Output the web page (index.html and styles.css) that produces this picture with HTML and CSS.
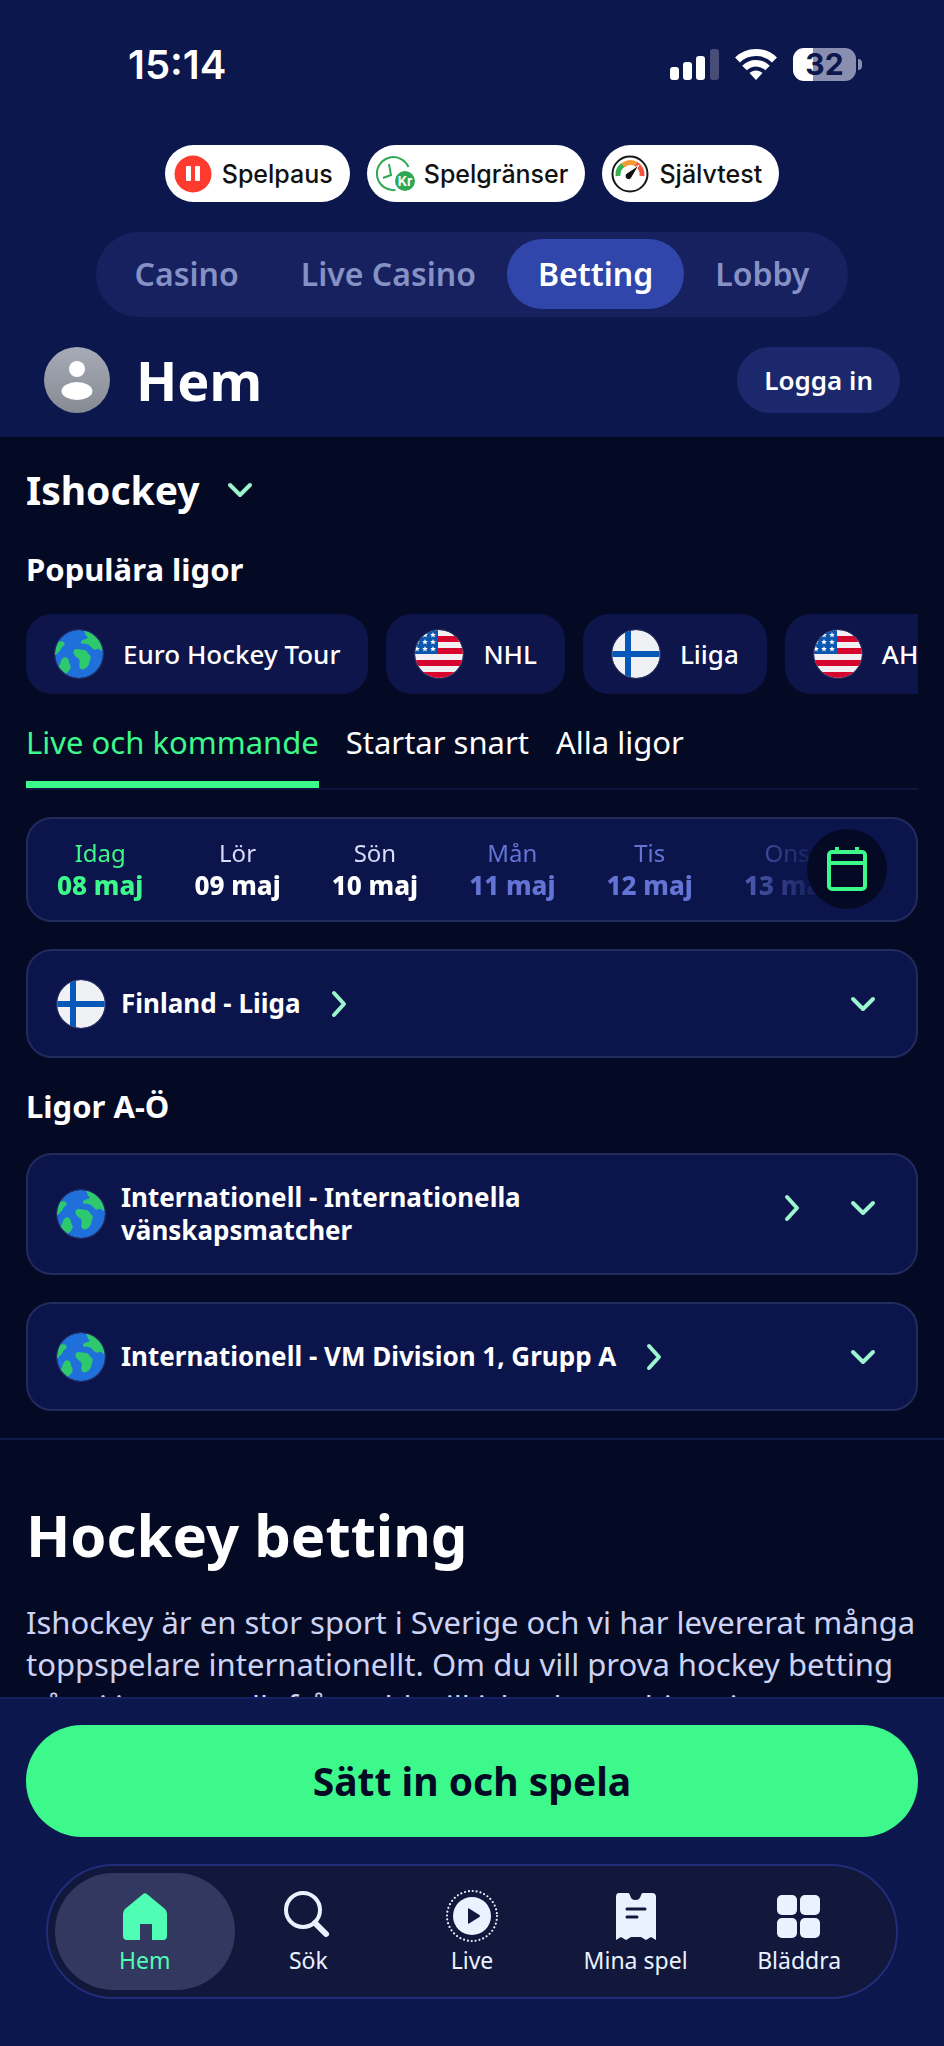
FILE: index.html
```html
<!DOCTYPE html>
<html lang="sv">
<head>
<meta charset="utf-8">
<meta name="viewport" content="width=device-width, initial-scale=1">
<title>Ishockey</title>
<link rel="stylesheet" href="styles.css">
</head>
<body>
<svg class="defs" aria-hidden="true">
  <defs>
    <clipPath id="disc"><circle cx="24" cy="24" r="24"/></clipPath>
    <symbol id="globe" viewBox="0 0 48 48">
      <g clip-path="url(#disc)">
        <rect width="48" height="48" fill="#2070dc"/>
        <g fill="#2fc96d">
          <path d="M29 1C31 4 30 6 33 7C32 10 26 9 26 12C26 15 31 13 34 15C37 17 38 21 42 19C45 18 46 22 49 22V0Z"/>
          <path d="M-1 11C3 11 6 11 9 12C11 15 8 16 6 18C6 21 4 21 3 23L-1 26Z"/>
          <path d="M19 20C22 18 25 20 29 20C32 20 32 23 35 25C37 28 34 31 34 34C32 39 27 41 25 38C23 35 26 32 24 29C21 27 17 24 19 20Z"/>
          <path d="M8 28C11 26 14 29 14 32C14 34 17 36 15 39C14 42 12 42 11 44L3 37C6 34 5 31 8 28Z"/>
        </g>
      </g>
    </symbol>
    <symbol id="usa" viewBox="0 0 48 48">
      <g clip-path="url(#disc)">
        <rect width="48" height="48" fill="#f2f0f2"/>
        <path d="M0 6h48v6H0zM0 18h48v6H0zM0 30h48v6H0zM0 42h48v6H0z" fill="#d6062f"/>
        <path d="M0 0h23v24H0z" fill="#0a55b0"/>
        <g fill="#fff">
          <path id="star" d="M18 2l.8 1.900 2 .2-1.500 1.300.5 2-1.800-1.100-1.800 1.100.5-2-1.500-1.300 2-.2z"/>
          <use href="#star" y="7"/><use href="#star" y="14"/>
          <use href="#star" x="-8"/><use href="#star" x="-8" y="7"/><use href="#star" x="-8" y="14"/>
          <use href="#star" x="-16" y="14"/><use href="#star" x="-16" y="7"/>
        </g>
      </g>
    </symbol>
    <symbol id="finland" viewBox="0 0 48 48">
      <g clip-path="url(#disc)">
        <rect width="48" height="48" fill="#f0f1f4"/>
        <path d="M13 0h6v48h-6zM0 21h48v6H0z" fill="#0758b8"/>
      </g>
    </symbol>
    <symbol id="down" viewBox="0 0 28 18">
      <path d="M4 4l10 10L24 4" fill="none" stroke="#9df5cf" stroke-width="4" stroke-linecap="round" stroke-linejoin="round"/>
    </symbol>
    <symbol id="right" viewBox="0 0 18 28">
      <path d="M4 3l10 11L4 25" fill="none" stroke="#9df5cf" stroke-width="4" stroke-linecap="round" stroke-linejoin="round"/>
    </symbol>
  </defs>
</svg>
<div class="app">
  <header class="header">
    <div class="status">
      <span class="clock">15:14</span>
      <div class="status-icons">
        <svg width="49" height="33" viewBox="0 0 49 33" fill="#fff" aria-hidden="true">
          <rect x="0" y="19" width="9" height="13" rx="3"/><rect x="13" y="14" width="9" height="18" rx="3"/><rect x="26" y="8" width="9" height="24" rx="3"/><rect x="40" y="1" width="9" height="31" rx="3" opacity=".24"/>
        </svg>
        <svg width="42" height="33" viewBox="0 0 42 33" fill="none" stroke="#fff" aria-hidden="true">
          <path d="M2.500 12C12.500 2 29.500 2 39.500 12" stroke-width="7"/>
          <path d="M9.500 20C16 13.500 26 13.500 32.500 20" stroke-width="6.500"/>
          <path d="M21 32l-6.500-7c3.500-3.500 9.500-3.500 13 0z" fill="#fff" stroke="none"/>
        </svg>
        <span class="battery"><span class="battery-body">32</span><span class="battery-tip"></span></span>
      </div>
    </div>
    <nav class="tools" aria-label="Spelansvar">
      <a class="tool" href="#">
        <svg width="38" height="38" viewBox="0 0 38 38" aria-hidden="true"><circle cx="19" cy="19" r="18.500" fill="#ff3b30"/><rect x="12" y="11" width="5" height="15" rx="1" fill="#fff"/><rect x="21" y="11" width="5" height="15" rx="1" fill="#fff"/></svg>
        Spelpaus
      </a>
      <a class="tool" href="#">
        <svg width="38" height="38" viewBox="0 0 38 38" overflow="visible" aria-hidden="true"><path d="M32.500 12A16.500 16.500 0 1 0 19.500 35" fill="none" stroke="#2fa854" stroke-width="2"/><path d="M13 9l2 11-8 3" fill="none" stroke="#2fa854" stroke-width="2"/><circle cx="29" cy="26" r="10" fill="#2fa854"/><text x="29" y="31" class="kr">Kr</text></svg>
        Spelgränser
      </a>
      <a class="tool" href="#">
        <svg width="38" height="38" viewBox="0 0 38 38" fill="none" aria-hidden="true"><circle cx="19" cy="19" r="17.500" stroke="#171717" stroke-width="2"/><path d="M7 21A12 12 0 0 1 12 10" stroke="#35b14e" stroke-width="5"/><path d="M12 10.500A12 12 0 0 1 25 9" stroke="#f39a35" stroke-width="5"/><path d="M25 9A12 12 0 0 1 31 21" stroke="#f4533d" stroke-width="5"/><path d="M28 10l-7 12a3.500 3.500 0 1 1-5-4z" fill="#111" stroke="#fff" stroke-width="1"/></svg>
        Självtest
      </a>
    </nav>
    <nav class="products" aria-label="Produkter">
      <a class="product" href="#">Casino</a>
      <a class="product" href="#">Live Casino</a>
      <a class="product product-active" href="#" aria-current="page">Betting</a>
      <a class="product" href="#">Lobby</a>
    </nav>
    <div class="title-row">
      <svg class="avatar" viewBox="0 0 66 66" aria-hidden="true">
        <defs><linearGradient id="grey" x1="0" y1="0" x2="0" y2="1"><stop offset="0" stop-color="#a7abb6"/><stop offset="1" stop-color="#868a93"/></linearGradient></defs>
        <circle cx="33" cy="33" r="33" fill="url(#grey)"/><circle cx="33" cy="22" r="8" fill="#fff"/><ellipse cx="33" cy="44" rx="15.500" ry="9" fill="#fff"/>
      </svg>
      <h1 class="title">Hem</h1>
      <button class="login" type="button">Logga in</button>
    </div>
  </header>

  <main class="main">
    <button class="sport" type="button">Ishockey <svg width="28" height="18" aria-hidden="true"><use href="#down"/></svg></button>
    <h2 class="heading heading-popular">Populära ligor</h2>
    <div class="chips">
      <a class="chip" href="#"><svg class="flag" aria-hidden="true"><use href="#globe"/></svg>Euro Hockey Tour</a>
      <a class="chip" href="#"><svg class="flag" aria-hidden="true"><use href="#usa"/></svg>NHL</a>
      <a class="chip" href="#"><svg class="flag" aria-hidden="true"><use href="#finland"/></svg>Liiga</a>
      <a class="chip" href="#"><svg class="flag" aria-hidden="true"><use href="#usa"/></svg>AHL</a>
    </div>
    <nav class="tabs" aria-label="Matcher">
      <a class="tab tab-active" href="#">Live och kommande</a>
      <a class="tab" href="#">Startar snart</a>
      <a class="tab" href="#">Alla ligor</a>
    </nav>
    <div class="card dates">
      <div class="days">
        <button class="day day-today" type="button"><span>Idag</span><b>08 maj</b></button>
        <button class="day" type="button"><span>Lör</span><b>09 maj</b></button>
        <button class="day" type="button"><span>Sön</span><b>10 maj</b></button>
        <button class="day day-muted" type="button"><span>Mån</span><b>11 maj</b></button>
        <button class="day day-muted" type="button"><span>Tis</span><b>12 maj</b></button>
        <button class="day day-muted" type="button"><span>Ons</span><b>13 maj</b></button>
      </div>
      <button class="calendar" type="button" aria-label="Välj datum">
        <svg width="40" height="46" viewBox="0 0 40 46" fill="none" stroke="#3df88a" stroke-width="4" aria-hidden="true"><rect x="2" y="6" width="36" height="37" rx="3"/><path d="M2 17h36M10 1v6M30 1v6"/></svg>
      </button>
    </div>
    <div class="card league">
      <a class="league-link" href="#"><svg class="flag" aria-hidden="true"><use href="#finland"/></svg><span class="league-name">Finland - Liiga</span><svg class="go" aria-hidden="true"><use href="#right"/></svg></a>
      <button class="toggle" type="button" aria-label="Visa matcher"><svg width="28" height="18" aria-hidden="true"><use href="#down"/></svg></button>
    </div>
    <h2 class="heading heading-all">Ligor A-Ö</h2>
    <div class="card league league-tall">
      <a class="league-link league-link-wide" href="#"><svg class="flag" aria-hidden="true"><use href="#globe"/></svg><span class="league-name">Internationell - Internationella<br>vänskapsmatcher</span><svg class="go" aria-hidden="true"><use href="#right"/></svg></a>
      <button class="toggle" type="button" aria-label="Visa matcher"><svg width="28" height="18" aria-hidden="true"><use href="#down"/></svg></button>
    </div>
    <div class="card league">
      <a class="league-link" href="#"><svg class="flag" aria-hidden="true"><use href="#globe"/></svg><span class="league-name">Internationell - VM Division 1, Grupp A</span><svg class="go" aria-hidden="true"><use href="#right"/></svg></a>
      <button class="toggle" type="button" aria-label="Visa matcher"><svg width="28" height="18" aria-hidden="true"><use href="#down"/></svg></button>
    </div>
    <article class="article">
      <h2 class="article-title">Hockey betting</h2>
      <p class="article-text">Ishockey är en stor sport i Sverige och vi har levererat många toppspelare internationellt. Om du vill prova hockey betting<br>går vi igenom allt från odds till ishockeyns historia</p>
    </article>
  </main>

  <footer class="footer">
    <button class="deposit" type="button">Sätt in och spela</button>
    <nav class="dock" aria-label="Meny">
      <a class="dock-item dock-active" href="#" aria-current="page">
        <svg class="dock-icon" viewBox="0 0 54 54" fill="#50fdb4" aria-hidden="true"><path d="M24.500 5.500q2.500-2.500 5 0L47 20q2 2 2 5v22q0 4-4 4H34V35H22v16H9q-4 0-4-4V25q0-3 2-5z"/></svg>
        <span>Hem</span>
      </a>
      <a class="dock-item" href="#">
        <svg class="dock-icon" viewBox="0 0 54 54" fill="none" stroke="#eaf2ff" aria-hidden="true"><circle cx="22" cy="21" r="17" stroke-width="4"/><path d="M34 34l11 11" stroke-width="6" stroke-linecap="round"/></svg>
        <span>Sök</span>
      </a>
      <a class="dock-item" href="#">
        <svg class="dock-icon" viewBox="0 0 54 54" aria-hidden="true"><circle cx="27" cy="27" r="25" fill="none" stroke="#eaf2ff" stroke-width="2.200" stroke-linecap="round" stroke-dasharray="0 3.927"/><circle cx="27" cy="27" r="19" fill="#eaf2ff"/><path d="M23 20v14q0 1 1 .5l10.500-6.500q1-1 0-2L24 19.500q-1-.5-1 .5z" fill="#12183c"/></svg>
        <span>Live</span>
      </a>
      <a class="dock-item" href="#">
        <svg class="dock-icon" viewBox="0 0 54 54" aria-hidden="true"><path d="M10 4h9c3 0 1 7 7.500 7S31 4 34 4h9q4 0 4 4v43l-5-3-5 3-5-3h-10l-5 3-5-3-5 3V8q0-4 3-4z" fill="#eaf2ff"/><path d="M18 20h18M18 28h10" stroke="#12183c" stroke-width="3" stroke-linecap="round"/></svg>
        <span>Mina spel</span>
      </a>
      <a class="dock-item" href="#">
        <svg class="dock-icon" viewBox="0 0 54 54" fill="#eaf2ff" aria-hidden="true"><rect x="5" y="6" width="20" height="20" rx="5"/><rect x="28" y="6" width="20" height="20" rx="5"/><rect x="5" y="29" width="20" height="20" rx="5"/><rect x="28" y="29" width="20" height="20" rx="5"/></svg>
        <span>Bläddra</span>
      </a>
    </nav>
  </footer>
</div>
</body>
</html>
```
FILE: styles.css
```css
* { box-sizing: border-box; }

body {
  margin: 0;
  background: #050a24;
  color: #fff;
  font-family: "Noto Sans", "Open Sans", sans-serif;
}

a { color: inherit; text-decoration: none; }

button {
  border: 0;
  padding: 0;
  background: none;
  color: inherit;
  font: inherit;
  cursor: pointer;
}

svg { display: block; flex: none; }
h1, h2, p { margin: 0; }

.defs { position: absolute; width: 0; height: 0; }

.app {
  display: flex;
  flex-direction: column;
  height: 100vh;
}

/* Header */
.header {
  flex: none;
  padding-bottom: 24px;
  background: #0c174d;
}

.status {
  display: flex;
  align-items: center;
  justify-content: space-between;
  padding: 40px 82px 56px 128px;
  font-family: Inter, sans-serif;
}

.clock { font-size: 40px; line-height: 49px; font-weight: 600; }
.status-icons { display: flex; align-items: center; gap: 16px; }
.battery { display: flex; align-items: center; gap: 2px; }

.battery-body {
  width: 63px;
  border-radius: 11px;
  background: linear-gradient(90deg, #fff 20px, #8a8fb1 20px);
  color: #0c174d;
  font-size: 30px;
  line-height: 33px;
  font-weight: 700;
  text-align: center;
}

.battery-tip {
  width: 4px;
  height: 11px;
  border-radius: 0 4px 4px 0;
  background: #8a8fb1;
}

.tools { display: flex; justify-content: center; gap: 17px; }

.tool {
  display: flex;
  align-items: center;
  gap: 10px;
  height: 57px;
  padding: 0 17px 0 9px;
  border-radius: 29px;
  background: #fff;
  color: #111;
  font-family: Inter, sans-serif;
  font-size: 25px;
  font-weight: 500;
}

.kr { fill: #fff; font-size: 13px; font-weight: 700; text-anchor: middle; }

.products {
  display: flex;
  width: fit-content;
  margin: 30px auto;
  padding: 7px 8px 8px;
  border-radius: 43px;
  background: #18215f;
  color: #8692c5;
  font-size: 32px;
  font-weight: 600;
}

.product { padding: 0 31px; border-radius: 35px; line-height: 70px; }
.product-active { background: #3046ab; color: #fff; }

.title-row {
  display: flex;
  align-items: center;
  padding: 0 44px;
}

.avatar { width: 66px; height: 66px; }
.title { flex: 1; margin-left: 26px; font-size: 54px; line-height: 66px; font-weight: 700; }

.login {
  padding: 0 27px;
  border-radius: 33px;
  background: #1b286b;
  font-size: 26px;
  line-height: 66px;
  font-weight: 600;
}

/* Content */
.main {
  flex: 1;
  min-height: 0;
  overflow: hidden;
  padding: 29px 26px 0;
}

.sport {
  display: flex;
  align-items: center;
  gap: 26px;
  font-size: 39px;
  line-height: 48px;
  font-weight: 700;
}

.heading { font-size: 31px; line-height: 40px; font-weight: 700; }
.heading-popular { margin: 35px 0 25px; }
.heading-all { margin: 28px 0 27px; }

.chips { display: flex; gap: 18px; overflow: hidden; }

.chip {
  display: flex;
  flex: none;
  align-items: center;
  gap: 20px;
  height: 80px;
  padding: 0 28px 0 29px;
  border-radius: 26px;
  background: #0d154b;
  font-size: 26px;
  font-weight: 500;
}

.flag {
  width: 48px;
  height: 48px;
  border-radius: 50%;
  box-shadow: 0 0 0 1px #2a3264;
}

.tabs {
  display: flex;
  gap: 27px;
  margin: 28px 0 27px;
  border-bottom: 2px solid #0f143e;
  font-size: 31px;
  line-height: 40px;
}

.tab { padding-bottom: 19px; border-bottom: 7px solid transparent; white-space: nowrap; }
.tab-active { border-color: #3df88a; color: #3df88a; }

.card {
  display: flex;
  align-items: center;
  border: 2px solid #232a5e;
  border-radius: 26px;
  background: #0c154b;
}

.dates { position: relative; height: 105px; padding: 0 29px 2px; }

.days {
  display: flex;
  flex: 1;
  gap: 51px;
  min-width: 0;
  padding: 4px 0;
  mask-image: linear-gradient(90deg, #000 660px, transparent 770px);
}

.day {
  flex: none;
  display: flex;
  flex-direction: column;
  align-items: center;
  font-size: 24px;
  line-height: 32px;
}

.day span { color: #d8dcf8; }
.day b { font-size: 26px; font-weight: 800; }
.day.day-today, .day-today span { color: #3df88a; }
.day.day-muted, .day-muted span { color: #6474d4; }

.calendar {
  position: absolute;
  right: 29px;
  display: grid;
  place-items: center;
  width: 80px;
  height: 80px;
  border-radius: 50%;
  background: #050a24;
}

.league { min-height: 109px; margin-top: 27px; padding: 16px 27px 16px 29px; }
.league-tall { min-height: 122px; }

.league-link {
  display: flex;
  align-items: center;
  gap: 16px;
  font-size: 26px;
  line-height: 33px;
  font-weight: 700;
}

.league-link-wide { flex: 1; }
.league-link-wide .league-name { flex: 1; }
.go { width: 18px; height: 28px; margin-left: 13px; }
.toggle { margin-left: auto; padding: 12px; }
.league-link-wide + .toggle { margin-left: 36px; }
.league-tall .go, .league-tall .toggle { margin-bottom: 12px; }

.article {
  margin: 27px -26px 0;
  padding: 59px 26px 0;
  border-top: 2px solid #10174a;
}

.article-title { margin-bottom: 30px; font-size: 58px; line-height: 72px; font-weight: 700; }
.article-text { color: #cdd3f5; font-size: 31px; line-height: 42px; }

/* Bottom bar */
.footer {
  flex: none;
  padding: 26px 26px 47px;
  border-top: 2px solid #14205f;
  background: #0c174d;
}

.deposit {
  display: block;
  width: 100%;
  margin-bottom: 27px;
  border-radius: 56px;
  background: #3df88a;
  color: #050a24;
  font-size: 39px;
  line-height: 112px;
  font-weight: 700;
}

.dock {
  display: grid;
  grid-template-columns: repeat(5, 1fr);
  margin: 0 20px;
  padding: 7px 15px;
  border: 2px solid #232c78;
  border-radius: 68px;
  background: #12183c;
  color: #eaf2ff;
  font-size: 23px;
  line-height: 34px;
}

.dock-item {
  display: flex;
  flex-direction: column;
  align-items: center;
  height: 117px;
  margin: 0 -8px;
  padding-top: 16px;
  border-radius: 59px;
}

.dock-icon { width: 54px; height: 54px; }
.dock-active { background: #32385f; color: #50fdb4; }
```
